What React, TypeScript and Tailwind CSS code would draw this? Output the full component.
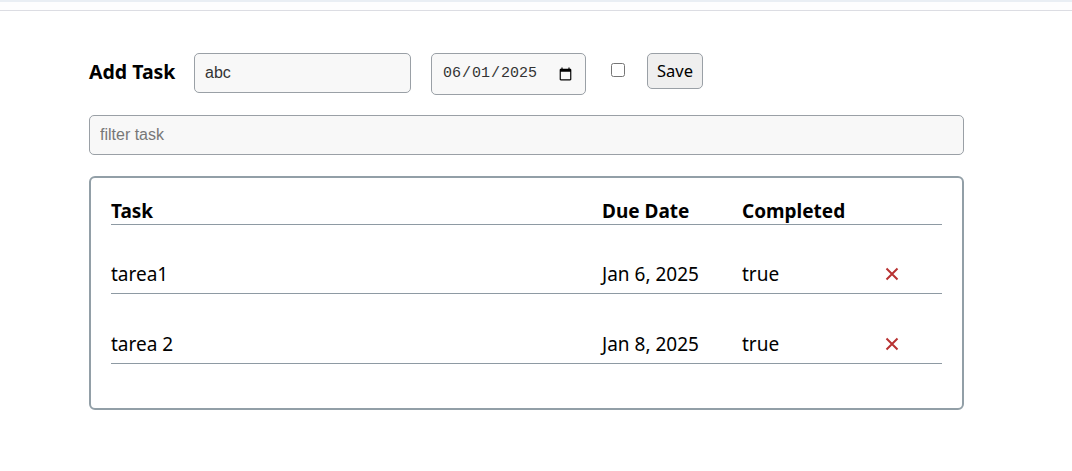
import React from "react";

const rows = [
  { task: "tarea1", due: "Jan 6, 2025", done: "true" },
  { task: "tarea 2", due: "Jan 8, 2025", done: "true" },
];

function XIcon() {
  return (
    <svg width="14" height="14" viewBox="0 0 14 14" className="block">
      <path d="M1.5 1.5 L12.5 12.5 M12.5 1.5 L1.5 12.5" stroke="#b83232" strokeWidth="2" strokeLinecap="butt" />
    </svg>
  );
}

export default function App() {
  return (
    <div className="min-h-[471px] bg-white text-black" style={{ fontFamily: '"Noto Sans", "Open Sans", sans-serif' }}>
      <div className="h-[11px] border-t-2 border-b border-t-[#e9eef4] border-b-[#dcdde3] bg-[#fdfdfe]" />
      <div className="pl-[89px] pt-[42px] w-[964px]">
        <div className="flex items-start">
          <span className="text-[19.5px] font-bold leading-[24px] mt-[7px] w-[105px]">Add Task</span>
          <input
            defaultValue="abc"
            className="w-[217px] h-[40px] rounded-[5px] border border-[#9aa0a6] bg-[#f8f8f8] px-[10px] text-[16px] text-[#333] outline-none"
            style={{ fontFamily: '"Liberation Sans", Arial, sans-serif' }}
          />
          <input
            type="date"
            defaultValue="2025-06-01"
            className="ml-[20px] w-[155px] h-[42px] rounded-[5px] border border-[#9aa0a6] bg-[#f8f8f8] pl-[10px] pr-[10px] text-[15px] text-[#333] outline-none"
            style={{ fontFamily: '"Liberation Mono", monospace' }}
          />
          <input type="checkbox" className="ml-[25px] mt-[10px] w-[14px] h-[14px]" />
          <button
            className="ml-[22px] w-[56px] h-[36px] rounded-[5px] border border-[#9aa0a6] bg-[#efefef] text-[16.5px] leading-none"
          >
            Save
          </button>
        </div>
        <input
          placeholder="filter task"
          className="mt-[20px] block w-[875px] h-[40px] rounded-[5px] border border-[#9aa0a6] bg-[#f8f8f8] px-[10px] text-[16px] text-[#333] placeholder:text-[#777] outline-none"
          style={{ fontFamily: '"Liberation Sans", Arial, sans-serif' }}
        />
        <div className="mt-[21px] w-[875px] rounded-[6px] border-2 border-[#929fa7] px-[20px] pt-[21px] pb-[44px]">
          <div className="flex border-b border-[#8e9aa3] text-[19px] font-bold leading-[24px] pb-[1px]">
            <div className="w-[491px]">Task</div>
            <div className="w-[140px]">Due Date</div>
            <div className="flex-1">Completed</div>
          </div>
          {rows.map((r, i) => (
            <div
              key={r.task}
              className={
                i === 0
                  ? "flex items-center border-b border-[#8e9aa3] text-[19px] leading-[24px] pt-[37px] pb-[7px]"
                  : "flex items-center border-b border-[#8e9aa3] text-[19px] leading-[24px] pt-[38px] pb-[7px]"
              }
            >
              <div className="w-[491px]">{r.task}</div>
              <div className="w-[140px]">{r.due}</div>
              <div className="w-[143px]">{r.done}</div>
              <div className="flex-1"><XIcon /></div>
            </div>
          ))}
        </div>
      </div>
    </div>
  );
}
